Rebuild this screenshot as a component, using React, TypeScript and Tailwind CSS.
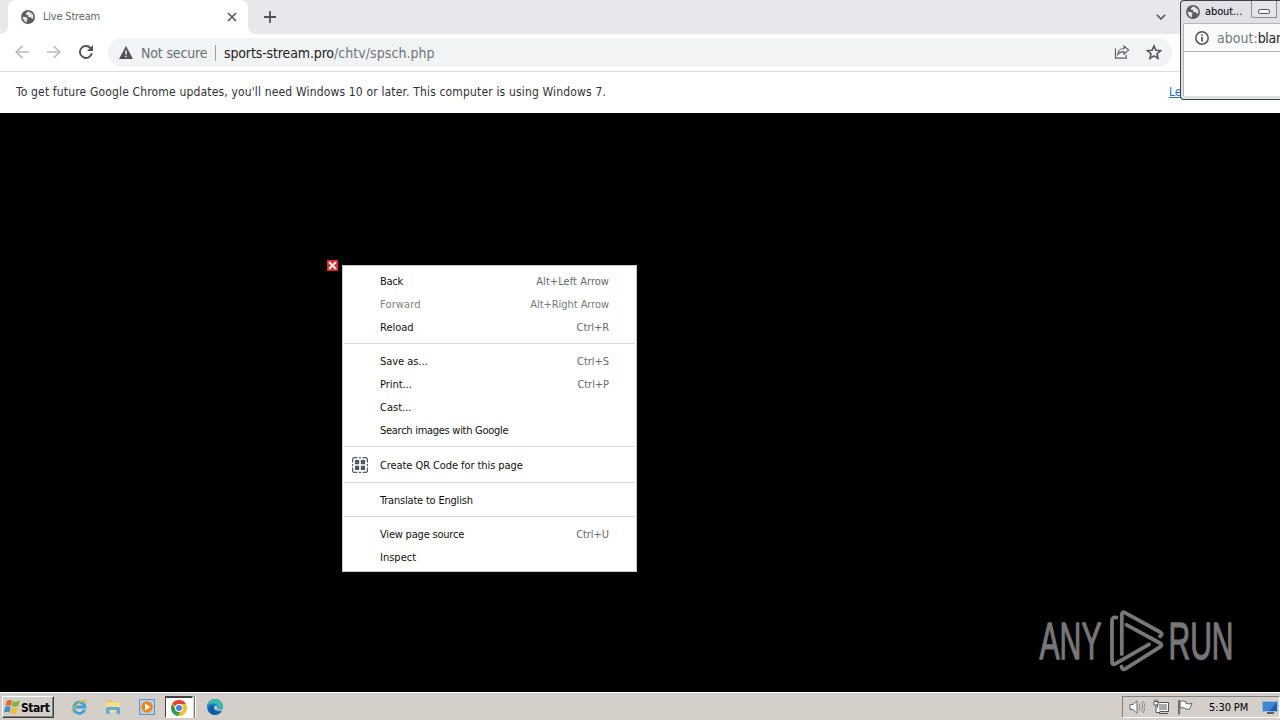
import type { ReactNode } from 'react'

type MenuItem = { label: string; keys?: string; disabled?: boolean; icon?: boolean; width: string; keysWidth?: string }

const MENU: { pad: string; items: MenuItem[] }[] = [
  {
    pad: 'pt-1 h-[78px]',
    items: [
      { label: 'Back', keys: 'Alt+Left Arrow', width: 'tracking-[-0.3px]', keysWidth: 'tracking-[0.05px]' },
      { label: 'Forward', keys: 'Alt+Right Arrow', disabled: true, width: 'tracking-[0.15px]', keysWidth: 'tracking-[-0.05px]' },
      { label: 'Reload', keys: 'Ctrl+R', width: 'tracking-[0px]', keysWidth: 'tracking-[-0.05px]' },
    ],
  },
  {
    pad: 'pt-[6px] h-[103px]',
    items: [
      { label: 'Save as...', keys: 'Ctrl+S', width: 'tracking-[-0.05px]', keysWidth: 'tracking-[-0.05px]' },
      { label: 'Print...', keys: 'Ctrl+P', width: 'tracking-[-0.05px]', keysWidth: 'tracking-[-0.05px]' },
      { label: 'Cast...', width: 'tracking-[0px]' },
      { label: 'Search images with Google', width: 'tracking-[-0.28px]' },
    ],
  },
  { pad: 'pt-[7px] h-[36px]', items: [{ label: 'Create QR Code for this page', icon: true, width: 'tracking-[-0.08px]' }] },
  { pad: 'pt-[6px] h-[34px]', items: [{ label: 'Translate to English', width: 'tracking-[-0.2px]' }] },
  {
    pad: 'pt-[6px] h-[54px]',
    items: [
      { label: 'View page source', keys: 'Ctrl+U', width: 'tracking-[-0.2px]', keysWidth: 'tracking-[-0.05px]' },
      { label: 'Inspect', width: 'tracking-[0px]' },
    ],
  },
]

function Globe({ className }: { className: string }) {
  return (
    <svg viewBox="0 0 14 14" className={className}>
      <circle cx="7" cy="7" r="7" fill="#5a5e63" />
      <path d="M7.5 1.3 5 3.2v1.6l2 .3.3 1.9 2.5.3 1.6 1.9 1.1-2.5-.7-2.5z" fill="#e4e6e9" />
      <path d="M1.3 6.8 5 7l1.7 1.8-.9 1.7v2L3.2 11z" fill="#e4e6e9" />
    </svg>
  )
}

function TabStrip() {
  return (
    <div className="flex h-[34px] bg-[#e6e8eb] pl-2">
      <div className="relative flex w-[240px] items-center rounded-t-lg bg-white pl-[13px]">
        <svg viewBox="0 0 8 8" className="absolute bottom-0 -left-2 h-2 w-2">
          <path d="M8 0v8H0a8 8 0 0 0 8-8" fill="#fff" />
        </svg>
        <svg viewBox="0 0 8 8" className="absolute -right-2 bottom-0 h-2 w-2">
          <path d="M0 0v8h8a8 8 0 0 1-8-8" fill="#fff" />
        </svg>
        <Globe className="h-[14px] w-[14px]" />
        <span className="ml-2 flex-1 pt-px text-[11px] tracking-[-0.2px] text-[#63666b]">Live Stream</span>
        <svg viewBox="0 0 10 10" className="mr-[11px] h-[10px] w-[10px]">
          <path d="m1 1 8 8M9 1 1 9" stroke="#5a5e63" strokeWidth="1.7" />
        </svg>
      </div>
      <svg viewBox="0 0 12 12" className="mt-[11px] ml-4 h-3 w-3">
        <path d="M6 0v12M0 6h12" stroke="#505459" strokeWidth="1.8" />
      </svg>
      <svg viewBox="0 0 10 6" className="mt-[14px] mr-[114px] ml-auto h-[6px] w-[10px]">
        <path d="m.8.8 4.2 4.2L9.2.8" fill="none" stroke="#55595e" strokeWidth="1.6" />
      </svg>
    </div>
  )
}

function Toolbar() {
  return (
    <div className="flex h-[38px] items-center border-b border-[#d9dbdd] bg-white pl-[15px]">
      <svg viewBox="0 0 14 14" className="mb-px h-[14px] w-[14px]">
        <path d="M14 7H1.5M7.3 1 1.3 7l6 6" fill="none" stroke="#bbbdbf" strokeWidth="1.7" />
      </svg>
      <svg viewBox="0 0 14 14" className="mb-px ml-[18px] h-[14px] w-[14px]">
        <path d="M0 7h12.5M6.7 1l6 6-6 6" fill="none" stroke="#bbbdbf" strokeWidth="1.7" />
      </svg>
      <svg viewBox="0 0 14 14" className="mb-px ml-[18px] h-[14px] w-[14px]">
        <path d="M12.8 8.3A6 6 0 1 1 11.3 2.8L13 4.5" fill="none" stroke="#505459" strokeWidth="1.9" />
        <path d="M14 0v6H8z" fill="#505459" />
      </svg>
      <div className="ml-[15px] flex h-[29px] w-[1064px] items-center rounded-full bg-[#f1f3f4] pl-[11px] text-[14px]">
        <svg viewBox="0 0 14 13" className="mb-px h-[13px] w-[14px]">
          <path d="M7 0 14 13H0z" fill="#505459" />
          <path d="M7 4.5v4M7 9.7v1.6" stroke="#f1f3f4" strokeWidth="1.5" />
        </svg>
        <span className="ml-2 w-[67px] pt-px tracking-[-0.15px] whitespace-nowrap text-[#6a6e73]">Not secure</span>
        <span className="ml-[7px] h-4 w-px bg-[#9a9da1]" />
        <span className="ml-2 pt-px tracking-[-0.13px] whitespace-nowrap text-[#202124]">
          sports-stream.pro<span className="tracking-[0.06px] text-[#707479]">/chtv/spsch.php</span>
        </span>
        <svg viewBox="0 0 16 14" className="mr-4 mb-px ml-auto h-[14px] w-4" fill="none" stroke="#5f6368" strokeWidth="1.2">
          <path d="M1.5 3.5v9.7h10.7V9.8" />
          <path d="M10 1v2.5C6 3.5 4 6.5 3.8 9.5 5.5 7.3 7.3 6.7 10 6.7v2.5l4.6-4.1z" />
        </svg>
        <svg viewBox="0 0 24 24" className="mr-[10px] mb-px h-4 w-4" fill="none" stroke="#505459" strokeWidth="2.3">
          <path d="m12 2.8 2.8 6.5 7.1.6-5.4 4.7 1.6 6.9-6.1-3.7-6.1 3.7 1.6-6.9-5.4-4.7 7.1-.6z" />
        </svg>
      </div>
    </div>
  )
}

function PopupWindow() {
  return (
    <div className="absolute top-0 right-0 h-[100px] w-[100px] overflow-hidden rounded-l-[4px] border border-r-0 border-[#3f4247] bg-[#dfe1e6] pl-[2px]">
      <div className="flex h-[22px] items-center pl-[3px]">
        <Globe className="h-[14px] w-[14px]" />
        <span className="ml-[5px] w-[46px] pt-px text-[11px] tracking-[-0.1px] whitespace-nowrap text-black">about...</span>
        <div className="flex h-[17px] w-[26px] shrink-0 items-center justify-center self-start rounded-bl-[3px] border border-t-0 border-[#898c92] bg-[#e4e6eb]">
          <span className="mt-[5px] h-[5px] w-3 rounded-[2px] border border-[#55585e] bg-white" />
        </div>
      </div>
      <div className="flex h-[29px] items-center border border-r-0 border-[#b4b6b9] bg-[#f9fafa] pl-[11px]">
        <svg viewBox="0 0 14 14" className="h-[14px] w-[14px] shrink-0" fill="none" stroke="#505459" strokeWidth="1.5">
          <circle cx="7" cy="7" r="6.2" />
          <path d="M7 6v4.5M7 3.2v1.6" strokeWidth="1.7" />
        </svg>
        <span className="ml-2 pt-px text-[14px] tracking-[0.02px] whitespace-nowrap text-[#74777c]">
          about:<span className="tracking-[-0.35px] text-[#202124]">blan</span>
        </span>
      </div>
      <div className="h-[44px] border-l border-[#b4b6b9] bg-white" />
    </div>
  )
}

function ContextMenu() {
  return (
    <div className="absolute top-[265px] left-[342px] h-[307px] w-[295px] border border-[#c8c8c8] bg-white px-px">
      {MENU.map((group, i) => (
        <div key={i} className={`${group.pad} ${i < MENU.length - 1 ? 'border-b border-[#d8d8d8]' : ''}`}>
          {group.items.map((item) => (
            <div key={item.label} className="flex h-[23px] items-center pr-[26px] pl-[8px] text-[11px] whitespace-nowrap">
              <span className="w-[28px] shrink-0 pb-[2px]">
                {item.icon && (
                  <svg viewBox="0 0 16 16" className="h-4 w-4" fill="none" stroke="#55595e" strokeWidth="1.2">
                    <path d="M.6 5.5V2.5Q.6.6 2.5.6h3M7 .6h2M10.5.6h3q1.9 0 1.9 1.9v3M15.4 7v2M15.4 10.5v3q0 1.9-1.9 1.9h-3M9 15.4H7M5.5 15.4h-3Q.6 15.4.6 13.5v-3M.6 9V7" />
                    <path d="M3 3h4.2v4.2H3zM8.8 3H13v4.2H8.8zM3 8.8h4.2V13H3zM8.8 8.8H13V13H8.8z" fill="#55595e" stroke="none" />
                  </svg>
                )}
              </span>
              <span className={`pt-[2px] ${item.width} ${item.disabled ? 'text-[#808080]' : 'text-[#111]'}`}>{item.label}</span>
              <span className={`ml-auto pt-[2px] ${item.keysWidth ?? ''} ${item.disabled ? 'text-[#777]' : 'text-[#67696d]'}`}>
                {item.keys}
              </span>
            </div>
          ))}
        </div>
      ))}
    </div>
  )
}

function Watermark() {
  return (
    <svg
      viewBox="0 0 220 80"
      className="absolute top-[605px] left-[1035px] h-[80px] w-[220px]"
      fill="none"
      stroke="#777"
      strokeWidth="3.8"
      strokeLinecap="round"
      strokeLinejoin="round"
    >
      <g fill="#777" strokeWidth="1.3" fontFamily="'Liberation Sans', sans-serif" fontSize="52">
        <text x="4.5" y="54" textLength="62" lengthAdjust="spacingAndGlyphs">ANY</text>
        <text x="133.5" y="54" textLength="65" lengthAdjust="spacingAndGlyphs">RUN</text>
      </g>
      <path d="M81.5 12.6Q77 11.5 77 16v40.5q0 4.2 3.6 2.2L114 39.3" />
      <path d="M86.8 49V10q0-4.3 3.5-2.2L125 27q3.5 2.2 0 4.3" />
      <path d="M91.5 19.8 124.8 38q3.6 2 0 4.1L91.5 63.2Q87.5 66 86.5 61.5" />
    </svg>
  )
}

function TaskIcon({ children, className }: { children: ReactNode; className: string }) {
  return (
    <svg viewBox="0 0 16 16" className={`h-4 w-4 shrink-0 ${className}`}>
      {children}
    </svg>
  )
}

function Taskbar() {
  return (
    <div className="flex h-[28px] items-center border-t border-white bg-[#d4cfc8] pt-px pl-[2px]">
      <div className="flex h-[22px] w-[52px] items-center border border-t-white border-r-[#404040] border-b-[#404040] border-l-white pl-px shadow-[inset_-1px_-1px_0_#85817b]">
        <TaskIcon className="">
          <path d="M2.8 2Q5.5 0 8 1.6L6.8 7Q4 5.5 1.5 7z" fill="#e8632b" />
          <path d="M8.9 2Q12 3.5 16 1.6L14 7q-3 1.5-6.2.2z" fill="#82b63b" />
          <path d="M1.2 8Q4 6.5 6.5 8L5.3 13.5Q3 12 0 13.3z" fill="#3f8bd0" />
          <path d="M7.4 8.4q3 1.4 6.2.1L12.3 14q-3 1.5-6-.2z" fill="#f3bd32" />
        </TaskIcon>
        <span className="ml-px pt-px text-[12px] font-bold tracking-[-0.45px] text-black">Start</span>
      </div>
      <TaskIcon className="ml-[17px]">
        <path d="M13.6 10.8A5.6 5.6 0 1 1 13.9 8H4.5" fill="none" stroke="#39a1dc" strokeWidth="2.8" />
        <path d="M1.5 14.2C-1 10.5 10.8-.5 14.7 2c.8.6.5 1.8 0 2.8" fill="none" stroke="#e5b93b" strokeWidth="1.3" />
      </TaskIcon>
      <TaskIcon className="ml-[18px]">
        <path d="M1 1h5l1 2h7v5H1z" fill="#e8c65d" />
        <path d="M1 3.5h14V13H1z" fill="#f7df92" />
        <path d="M1 15V9.5Q1 8 2.5 8h11Q15 8 15 9.5V15h-3.5v-4h-7v4z" fill="#60acd6" />
      </TaskIcon>
      <TaskIcon className="ml-[18px]">
        <path d="M.5.5h15v15H.5z" fill="#b4d3eb" stroke="#5d91bf" />
        <circle cx="8" cy="8" r="5.8" fill="#ee861d" />
        <path d="M6 4.6 11.4 8 6 11.4z" fill="#fff" />
      </TaskIcon>
      <div className="ml-[10px] flex h-[22px] w-[28px] items-center border border-t-2 border-t-[#404040] border-r-white border-b-white border-l-[#404040] bg-white pl-[5px]">
        <TaskIcon className="">
          <circle cx="8" cy="8" r="8" fill="#f4bd2c" />
          <path d="M8 8 1.1 4A8 8 0 0 1 14.9 4H8z" fill="#dd4635" />
          <path d="m8 8 1 4-2.1 3.9A8 8 0 0 1 1.1 4L5 10z" fill="#329c53" />
          <circle cx="8" cy="8" r="4" fill="#fff" />
          <circle cx="8" cy="8" r="3" fill="#4384e6" />
        </TaskIcon>
      </div>
      <span className="ml-px h-[22px] w-[2px] border-l border-[#777] bg-white" />
      <TaskIcon className="ml-[11px]">
        <circle cx="8" cy="8" r="8" fill="#1b82c9" />
        <path d="M.3 6A8 8 0 0 1 15.9 7c0 3-2 4.5-5 3.6C13 5 5.5 3 .3 6" fill="#39bda6" />
        <path d="M7.2 6.4C4.6 11 10 14 14.5 12.1 11 17 5 16.8 2 13 0 9 3 5.5 7.2 6.4" fill="#125b9e" />
        <path d="M7.4 7q-1.6 4.4 6.8 4.8l1.8.5V10q-4 1.7-6-.4 1-1.2-.2-2.5z" fill="#d4cfc8" />
      </TaskIcon>
      <div className="ml-auto flex h-[22px] w-[158px] items-center border border-t-[#85817b] border-r-white border-b-white border-l-[#85817b] pl-[6px]">
        <TaskIcon className="">
          <path d="M1 5.5h3L8 1.8v12.4L4 10.5H1z" fill="#fff" stroke="#666" />
          <path d="M10 5q2 3 0 6M12 3.5q3.5 4.5 0 9M14 2q4 6 0 12" fill="none" stroke="#777" strokeWidth=".8" />
        </TaskIcon>
        <TaskIcon className="ml-[8px]">
          <path d="M4.5 3.5h11v9h-11zM6 14.5h9" fill="#fff" stroke="#555" />
          <path d="M6 5h8v6H6z" fill="#aaa" />
          <path d="M1 2.5v3.5h4V2.5zM2 .5v2m2-2v2M3 6v7.5h4" fill="#fff" stroke="#555" />
        </TaskIcon>
        <TaskIcon className="ml-[8px]">
          <path d="M1.5 15V1.5h1.2V15zM3 2.5q3-1.5 6 .5v1.5q3 .8 6 0L12.5 10q-2.5 1-5-.8Q5 8 3 9z" fill="#fff" stroke="#666" />
        </TaskIcon>
        <span className="ml-[16px] pt-[2px] text-[11px] tracking-[-0.1px] whitespace-nowrap text-black">5:30 PM</span>
        <svg viewBox="0 0 16 14" className="mr-px ml-auto h-[14px] w-4 shrink-0">
          <path d="M.5 1.5h15v10H.5z" fill="#205fac" stroke="#9ab8dc" />
          <path d="M1 2h14L7 11H1z" fill="#3b86cf" />
          <path d="M5 13h7" stroke="#303840" strokeWidth="1.5" />
        </svg>
      </div>
    </div>
  )
}

export default function App() {
  return (
    <div className="relative flex h-[720px] w-[1280px] flex-col overflow-hidden bg-black font-['DejaVu_Sans_Condensed','DejaVu_Sans',sans-serif] [font-stretch:condensed]">
      <TabStrip />
      <Toolbar />
      <div className="flex h-[41px] items-center bg-white px-4 pb-[2px] text-[12px] text-[#303134]">
        <span className="w-[1153px] tracking-[0.16px] whitespace-nowrap">
          To get future Google Chrome updates, you'll need Windows 10 or later. This computer is using Windows 7.
        </span>
        <a className="text-[#1a73c8] underline">Le</a>
      </div>
      <main className="flex-1" />
      <Taskbar />
      <div className="absolute top-[260px] left-[327px] flex h-[11px] w-[11px] items-center justify-center bg-[#db2932]">
        <svg viewBox="0 0 9 9" className="h-[9px] w-[9px]">
          <path d="m1 1 7 7M8 1 1 8" stroke="#fff3e4" strokeWidth="2" />
        </svg>
      </div>
      <ContextMenu />
      <Watermark />
      <PopupWindow />
    </div>
  )
}
